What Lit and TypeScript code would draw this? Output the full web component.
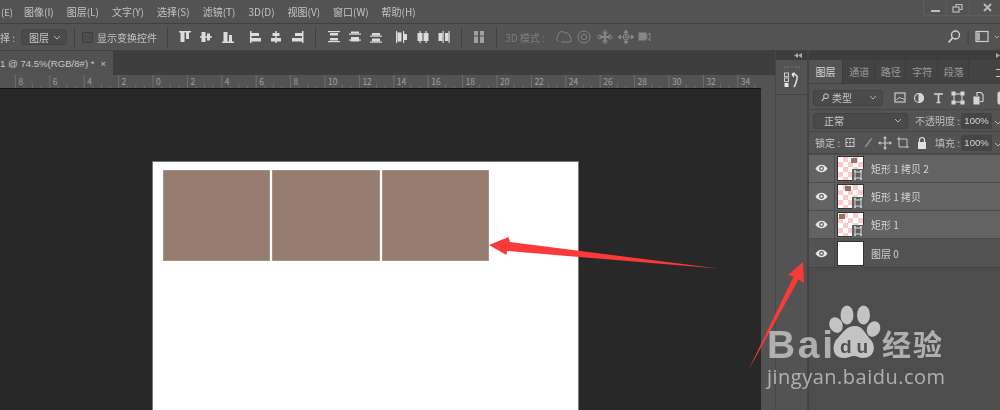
import { LitElement, html, css, svg } from "lit";
import { customElement } from "lit/decorators.js";

const menus = ["图像(I)", "图层(L)", "文字(Y)", "选择(S)", "滤镜(T)", "3D(D)", "视图(V)", "窗口(W)", "帮助(H)"];
const chev = html`<svg class="chev" width="8" height="5" viewBox="0 0 8 5"><path d="M1 1l3 3 3-3" fill="none" stroke="#b5b5b5" stroke-width="1"/></svg>`;

const ic = (body: unknown, w = 14) => html`<svg width=${w} height="14" viewBox="0 0 ${w} 14" fill="#dcdcdc">${body}</svg>`;
const alignIcons = [
  svg`<rect x="1" y="1" width="12" height="1.5"/><rect x="2.5" y="2" width="4" height="10"/><rect x="8" y="2" width="3" height="7"/>`,
  svg`<rect x="1" y="6.2" width="12" height="1.5"/><rect x="2.5" y="2" width="4" height="10"/><rect x="8" y="3.5" width="3" height="7"/>`,
  svg`<rect x="1" y="11.5" width="12" height="1.5"/><rect x="2.5" y="2" width="4" height="10"/><rect x="8" y="5" width="3" height="7"/>`,
  svg`<rect x="2" y="1" width="1.5" height="12"/><rect x="3" y="3" width="8" height="3"/><rect x="3" y="8" width="10" height="3.5"/>`,
  svg`<rect x="6.2" y="1" width="1.5" height="12"/><rect x="3.5" y="3" width="7" height="3"/><rect x="2" y="8" width="10" height="3.5"/>`,
  svg`<rect x="11" y="1" width="1.5" height="12"/><rect x="4" y="3" width="8" height="3"/><rect x="1" y="8" width="11" height="3.5"/>`,
];
const distIcons = [
  svg`<rect x="1" y="1" width="12" height="1.2"/><rect x="3" y="3" width="8" height="2.5"/><rect x="1" y="11" width="12" height="1.2"/><rect x="3" y="8" width="8" height="2.5"/>`,
  svg`<rect x="1" y="3.5" width="12" height="1.2"/><rect x="3" y="1.5" width="8" height="2"/><rect x="1" y="9.5" width="12" height="1.2"/><rect x="3" y="7" width="8" height="4.5"/>`,
  svg`<rect x="1" y="5.5" width="12" height="1.2"/><rect x="3" y="3" width="8" height="2.5"/><rect x="1" y="11.5" width="12" height="1.2"/><rect x="3" y="8.5" width="8" height="3"/>`,
  svg`<rect x="2" y="1" width="1.2" height="12"/><rect x="3.5" y="2.5" width="4" height="9"/><rect x="9" y="1" width="1.2" height="12"/><rect x="10" y="4" width="3" height="6"/>`,
  svg`<rect x="3.5" y="1" width="1.2" height="12"/><rect x="1.5" y="3" width="5" height="8"/><rect x="9.5" y="1" width="1.2" height="12"/><rect x="7.5" y="3" width="5" height="8"/>`,
  svg`<rect x="5.5" y="1" width="1.2" height="12"/><rect x="1.5" y="3" width="4" height="8"/><rect x="11.5" y="1" width="1.2" height="12"/><rect x="8" y="3" width="3.5" height="8"/>`,
];

const eye = html`<svg width="13" height="9" viewBox="0 0 13 9"><path d="M.5 4.5C2 2 4 .7 6.5.7S11 2 12.5 4.5C11 7 9 8.3 6.5 8.3S2 7 .5 4.5z" fill="#e6e6e6"/><circle cx="6.5" cy="4.5" r="2.4" fill="#555"/><circle cx="6.5" cy="4.5" r="1.2" fill="#e6e6e6"/></svg>`;

const layers = [
  { name: "矩形 1 拷贝 2", x: 13, on: true, shape: true },
  { name: "矩形 1 拷贝", x: 7, on: true, shape: true },
  { name: "矩形 1", x: 1, on: true, shape: true },
  { name: "图层 0", x: 0, on: false, shape: false },
];

const ticks = () => {
  const out: unknown[] = [];
  const labels = [8, 6, 4, 2, 0];
  for (let i = -4; i <= 17; i++) {
    const x = 153 + i * 34.4;
    const lab = i < 0 ? labels[i + 4] : i * 2;
    out.push(svg`<line x1=${x} x2=${x} y1="0" y2="13" stroke="#7c7c7c" stroke-width=".7"/>`);
    out.push(svg`<text x=${x + 3} y="9.5" font-size="8.5" fill="#a0a0a0">${lab}</text>`);
    for (const k of [1, 2, 3]) {
      const t = x + (k * 34.4) / 4;
      out.push(svg`<line x1=${t} x2=${t} y1=${k === 2 ? 9 : 11} y2="13" stroke="#7c7c7c" stroke-width=".6"/>`);
    }
  }
  return out;
};

@customElement("app-root")
export class AppRoot extends LitElement {
  static styles = css`
    :host { display: block; position: relative; width: 1000px; height: 410px; overflow: hidden; background: #535353; color: #c4c4c4;
      font-family: "Noto Sans CJK SC", "Liberation Sans", sans-serif; font-size: 10px; }
    .blur { filter: blur(.45px); height: 100%; }
    .menu { height: 23px; display: flex; align-items: center; gap: 13px; border-bottom: 1px solid #404040; font-size: 10px; position: relative; }
    .menu span { white-space: nowrap; }
    .menu .first { width: 11px; font-size: 9.5px; padding-left: 1px; box-sizing: border-box; }
    .winbtns { position: absolute; right: 0; top: 0; width: 76px; height: 15px; border: 1px solid #5e5e5e; border-width: 0 0 1px 1px; border-radius: 0 0 0 3px; display: flex; align-items: center; }
    .winbtns svg { flex: none; }
    .options { height: 26px; display: flex; align-items: center; border-bottom: 1px solid #404040; position: relative; white-space: nowrap; }
    .sel { height: 16px; box-sizing: border-box; background: #4a4a4a; border: 1px solid #434343; border-radius: 3px; display: flex; align-items: center; justify-content: space-between; padding: 0 5px 0 7px; color: #c8c8c8; flex: none; }
    .sel .lab { display: flex; align-items: center; gap: 3px; }
    .vsep { width: 1px; height: 19px; background: #3f3f3f; flex: none; }
    .cb { width: 9px; height: 9px; border: 1px solid #3c3c3c; border-radius: 2px; background: #4d4d4d; flex: none; }
    .g { display: flex; gap: 7.4px; align-items: center; }
    .dim { color: #7f7f7f; }
    .dimg { stroke: #868686; fill: none; }
    .main { display: flex; height: 359px; }
    .work { width: 775px; flex: none; display: flex; flex-direction: column; border-right: 1px solid #474747; box-sizing: content-box; }
    .tabs { height: 24px; background: #3e3e3e; flex: none; display: flex; }
    .tab { width: 113px; background: #525252; display: flex; align-items: center; box-sizing: border-box; font-family: "Liberation Sans", "Noto Sans CJK SC", sans-serif; font-size: 9.6px; gap: 6px; white-space: nowrap; color: #c8c8c8; }
    .workrow { flex: 1; display: flex; min-height: 0; }
    .docwrap { width: 761px; flex: none; display: flex; flex-direction: column; }
    .ruler { height: 13px; display: block; background: #535353; flex: none; }
    .canvas { flex: 1; background: #282828; padding-top: 73px; padding-left: 153px; box-sizing: border-box; border-top: 1px solid #111; overflow: hidden; }
    .page { width: 425px; height: 300px; background: #fff; box-shadow: 0 0 0 1px #777; padding: 7.5px 10px; box-sizing: border-box; display: flex; gap: 1.9px; }
    .sq { width: 107.4px; height: 91px; background: #967d70; box-shadow: inset 0 0 0 .5px #b5a59c; }
    .dock { width: 31px; flex: none; display: flex; flex-direction: column; border-right: 2px solid #434343; box-sizing: content-box; }
    .dockhead, .panelhead { height: 9px; background: #3d3d3d; flex: none; position: relative; }
    .dockbody { height: 34px; border-bottom: 1px solid #424242; display: flex; flex-direction: column; gap: 4px; align-items: center; justify-content: center; flex: none; }
    .grip { width: 16px; height: 2px; border-top: 2px dotted #666; box-sizing: border-box; }
    .panel { flex: 1; display: flex; flex-direction: column; background: #4d4d4d; min-width: 0; }
    .ptabs { height: 24px; display: flex; background: #434343; flex: none; position: relative; border-bottom: 1px solid #3f3f3f; box-sizing: border-box; }
    .ptabs span { width: 31.5px; display: flex; align-items: center; justify-content: center; color: #9b9b9b; border-right: 1px solid #3b3b3b; box-sizing: border-box; padding-left: 2px; }
    .ptabs span.on { width: 34px; background: #535353; color: #d8d8d8; padding-left: 0; }
    .pmenu { position: absolute; right: -3px; top: 9px; width: 7px; height: 6px; border-top: 1px solid #ccc; border-bottom: 1px solid #ccc; }
    .prow { display: flex; align-items: center; flex: none; padding-left: 4px; white-space: nowrap; background: #535353; border-bottom: 1px solid #474747; box-sizing: border-box; }
    .r1 { height: 26px; padding-top: 2px; }
    .r2 { height: 22px; }
    .r3 { height: 22px; gap: 0; }
    .inp { width: 31px; height: 16px; box-sizing: border-box; background: #454545; border-radius: 2px; font-size: 9.5px; display: flex; align-items: center; justify-content: center; color: #d5d5d5; font-family: "Liberation Sans", sans-serif; flex: none; }
    .rowi { display: flex; margin-left: 11px; align-items: center; flex: none; }
    .list { display: flex; flex-direction: column; gap: 1px; margin-top: 1px; }
    .layer { height: 27px; background: #636363; display: flex; align-items: center; color: #d4d4d4; }
    .layer.off { background: #535353; border-bottom: 1px solid #454545; height: 28px; }
    .eyec { width: 26px; height: 100%; flex: none; display: flex; align-items: center; justify-content: center; border-right: 1px solid #4a4a4a; box-sizing: border-box; }
    .thumb { width: 25px; height: 23px; margin-left: 2px; border: 1px solid #333; position: relative; flex: none; background: repeating-conic-gradient(#fbcaca 0 25%, #fff 0 50%) 0 0 / 10px 10px; }
    .thumb.white { background: #fff; }
    .chip { position: absolute; top: 1px; width: 6px; height: 5px; background: #8f7566; }
    .mask { position: absolute; right: -1px; bottom: -1px; width: 12px; height: 12px; background: #5f5f5f; display: flex; align-items: center; justify-content: center; }
    .lname { margin-left: 7px; font-size: 10px; }
    .overlay { position: absolute; inset: 0; pointer-events: none; }
  `;

  render() {
    return html`
      <div class="blur">
      <div class="menu"><span class="first">(E)</span>${menus.map((m) => html`<span>${m}</span>`)}
        <div class="winbtns">
          <svg width="76" height="14" viewBox="0 0 76 14" fill="none" stroke="#bcbcbc">
            <path d="M7 10h9" stroke-width="2"/><path d="M22 0v14M45 0v14" stroke="#5e5e5e"/>
            <rect x="29" y="6" width="6" height="5" stroke-width="1.2"/><path d="M32 6V3.5h6V8.5h-3" stroke-width="1.2"/>
            <path d="M60 3l7 7M67 3l-7 7" stroke-width="1.8"/>
          </svg>
        </div>
      </div>
      <div class="options">
        <span style="width:21px">择 :</span>
        <div class="sel" style="width:46px"><span>图层</span>${chev}</div>
        <div class="vsep" style="margin-left:7px"></div>
        <div class="cb" style="margin-left:7px"></div>
        <span style="margin-left:4px">显示变换控件</span>
        <div class="vsep" style="margin-left:10px"></div>
        <div class="g" style="margin-left:10px">${alignIcons.slice(0, 3).map((b) => ic(b))}</div>
        <div class="g" style="margin-left:13px">${alignIcons.slice(3).map((b) => ic(b))}</div>
        <div class="vsep" style="margin-left:10px"></div>
        <div class="g" style="margin-left:11px">${distIcons.slice(0, 3).map((b) => ic(b))}</div>
        <div class="g" style="margin-left:11px">${distIcons.slice(3).map((b) => ic(b))}</div>
        <div class="vsep" style="margin-left:10px"></div>
        <div style="margin-left:10px;display:flex">${ic(svg`<g fill="#a0a0a0"><rect x="2" y="1" width="4" height="12"/><rect x="8" y="1" width="4" height="12"/></g><rect x="0" y="5.5" width="14" height="1" fill="#535353"/>`)}</div>
        <div class="vsep" style="margin-left:10px"></div>
        <span class="dim" style="margin-left:8px;width:50px">3D 模式 :</span>
        <svg width="102" height="16" viewBox="0 0 102 16" class="dimg" stroke-width="1">
          <path d="M3 12a3 3 0 0 1 0-5 4 4 0 0 1 7-3 4 4 0 0 1 5 4 3 3 0 0 1 0 5H6"/>
          <g transform="translate(-1 0)"><circle cx="30" cy="8" r="6"/><circle cx="30" cy="8" r="2.8"/></g>
          <g transform="translate(-5 0)"><path d="M50 8h10M55 3v10" stroke-width="2"/><circle cx="55" cy="3.5" r="2"/><circle cx="55" cy="12.5" r="2"/><circle cx="50" cy="8" r="2"/><circle cx="60" cy="8" r="2"/></g>
          <g transform="translate(-6 0)"><path d="M70 8h14M77 2v12"/><path d="M77 1l2 2.5h-4zM77 15l2-2.5h-4zM69 8l2.5-2v4zM85 8l-2.5-2v4z" fill="#868686"/><circle cx="77" cy="8" r="3"/></g>
          <g transform="translate(-6 0)"><rect x="90" y="4" width="7" height="7" fill="#868686"/><path d="M97 7l4-3v8z"/></g>
        </svg>
        <svg style="position:absolute;left:946px;top:5px" width="54" height="16" viewBox="0 0 54 16" fill="none" stroke="#d0d0d0">
          <circle cx="9.5" cy="6" r="4" stroke-width="1.4"/><path d="M6.5 9L2.5 13.5" stroke-width="1.8"/>
          <path d="M22 1v14" stroke="#404040"/>
          <rect x="30" y="2.5" width="12" height="10" stroke-width="1.2"/><rect x="30" y="3.5" width="4" height="8" fill="#aaa" stroke="none"/>
          <path d="M49 7l2 2 2-2" stroke="#aaa"/>
        </svg>
      </div>
      <div class="main">
        <div class="work">
          <div class="tabs"><div class="tab"><span>1 @ 74.5%(RGB/8#) *</span><span>×</span></div></div>
          <div class="workrow">
            <div class="docwrap">
              <svg class="ruler" width="761" height="13" viewBox="0 0 761 13">${ticks()}</svg>
              <div class="canvas"><div class="page"><div class="sq"></div><div class="sq"></div><div class="sq"></div></div></div>
            </div>
          </div>
        </div>
        <div class="dock">
          <div class="dockhead"><svg style="position:absolute;left:18px;top:2px" width="8" height="5" viewBox="0 0 8 5" fill="#aaa"><path d="M4 0v5L0 2.5zM8 0v5L4 2.5z"/></svg></div>
          <div class="dockbody">
            <i class="grip"></i>
            <svg width="16" height="16" viewBox="0 0 16 16"><rect x=".5" y="1" width="4" height="3.6" fill="none" stroke="#ccc"/><rect x=".5" y="6" width="4" height="3.6" fill="none" stroke="#ccc"/><rect x=".5" y="11" width="4" height="4" fill="#e8e8e8"/><path d="M8 2c4 0 6 2 5 5s-1 5-3 8M8 2l3-1M8 2l2 3" fill="none" stroke="#e0e0e0" stroke-width="1.5"/></svg>
          </div>
        </div>
        <div class="panel">
          <div class="panelhead"><svg style="position:absolute;right:0;top:2px" width="4" height="5" viewBox="0 0 4 5" fill="#aaa"><path d="M0 0v5L4 2.5z"/></svg></div>
          <div class="ptabs"><span class="on">图层</span><span>通道</span><span>路径</span><span>字符</span><span>段落</span><i class="pmenu"></i></div>
          <div class="prow r1">
            <div class="sel" style="width:70px"><span class="lab"><svg width="8" height="9" viewBox="0 0 8 9" fill="none" stroke="#d0d0d0"><circle cx="5" cy="3.2" r="2.4"/><path d="M3.2 5L.8 8" stroke-width="1.2"/></svg>类型</span>${chev}</div>
            <div class="rowi">
              <svg width="110" height="14" viewBox="0 0 110 14" fill="none" stroke="#d5d5d5" stroke-width="1.1">
                <rect x="1" y="2" width="10" height="9"/><path d="M2.5 9l3-3 2 2 1-1 2 2" stroke-width="1"/>
                <circle cx="25" cy="7" r="4.5"/><path d="M25 2.5a4.5 4.5 0 0 1 0 9z" fill="#d5d5d5"/>
                <path d="M40 3h9M44.5 3v8.5M42.5 11.5h4" stroke-width="1.6"/>
                <rect x="60" y="3" width="8" height="8"/><path d="M58 1h3v3h-3zM67 1h3v3h-3zM58 10h3v3h-3zM67 10h3v3h-3z" fill="#d5d5d5"/>
                <path d="M80 6h5v7h-5z" fill="#d5d5d5"/><path d="M83 5V1.5h4l2 2v7h-3"/>
                <rect x="104" y="1" width="4" height="12" rx="2" fill="#d5d5d5"/>
              </svg>
            </div>
          </div>
          <div class="prow r2">
            <div class="sel" style="width:95px"><span style="margin-left:3px">正常</span>${chev}</div>
            <span style="margin-left:7px;width:46px;color:#bdbdbd;flex:none">不透明度 :</span><div class="inp">100%</div>
            <span style="margin-left:2px">${chev}</span>
          </div>
          <div class="prow r3">
            <span style="margin-left:2px;width:24px;flex:none">锁定 :</span>
            <svg width="90" height="14" viewBox="0 0 90 14" fill="none" stroke="#c8c8c8" style="margin-left:4px;flex:none">
              <g transform="translate(2 0)"><rect x="1" y="2.5" width="8" height="8"/><path d="M1 6.5h8M5 2.5v8" stroke-dasharray="2 1"/></g>
              <path d="M21 12l2-3 5-7 1 1-5 7z" fill="#9a9a9a" stroke="none"/>
              <g transform="translate(2 0)"><path d="M40 1v12M34 7h12" stroke-width="1.2"/><path d="M40 0l2 2.5h-4zM40 14l2-2.5h-4zM33 7l2.5-2v4zM47 7l-2.5-2v4z" fill="#c8c8c8" stroke="none"/></g>
              <path d="M54 3h10v9M56 1v10h10"/>
              <g transform="translate(3 0)"><path d="M72 6h8v7h-8z" fill="#e0e0e0" stroke="none"/><path d="M73.5 6V4a2.5 2.5 0 0 1 5 0v2" stroke="#e0e0e0" stroke-width="1.2"/></g>
            </svg>
            <span style="margin-left:2px;width:26px;flex:none;color:#bdbdbd">填充 :</span><div class="inp">100%</div>
            <span style="margin-left:2px">${chev}</span>
          </div>
          <div class="list">
            ${layers.map((l) => html`
              <div class="layer ${l.on ? "" : "off"}">
                <div class="eyec">${eye}</div>
                <div class="thumb ${l.on ? "" : "white"}">
                  ${l.shape ? html`
                    <i class="chip" style="left:${l.x}px"></i>
                    <i class="mask"><svg width="10" height="10" viewBox="0 0 10 10" fill="none" stroke="#ddd"><rect x="2" y="2" width="6" height="6"/><path d="M1 1h2M7 1h2M1 9h2M7 9h2" stroke-width="1.4"/></svg></i>` : ""}
                </div>
                <span class="lname">${l.name}</span>
              </div>`)}
          </div>
        </div>
      </div>
      </div>
      <svg class="overlay" width="1000" height="410" viewBox="0 0 1000 410">
        <path d="M718 268.5L510 242 508.5 237 489 245 506.5 255 507 251z" fill="#f93a3a"/>
        <path d="M748 371L793.5 276.5 788 275 803 262 804 283 798.5 279.5z" fill="#f93a3a"/>
        <g fill="rgba(225,225,225,.8)">
          <ellipse cx="847" cy="315" rx="6.5" ry="9.5"/>
          <ellipse cx="863.5" cy="315" rx="6.5" ry="9.5"/>
          <ellipse cx="836" cy="325" rx="6.5" ry="8" transform="rotate(-25 836 325)"/>
          <ellipse cx="873.5" cy="329" rx="6.5" ry="8" transform="rotate(25 873.5 329)"/>
          <path d="M855 326c8 0 10 8 16 14 5 6 4 18-8 18-4 0-6-2-9-2s-6 2-10 2c-12 0-12-12-8-18 6-6 10-14 19-14z"/>
        </g>
        <text x="767" y="358" font-size="39" font-weight="700" fill="rgba(235,235,235,.62)" font-family="Liberation Sans" textLength="66">Bai</text>
        <text x="840" y="353" font-size="19" font-weight="700" fill="#505050" font-family="Liberation Sans" textLength="28">du</text>
        <text x="882" y="356" font-size="29" font-weight="700" fill="rgba(235,235,235,.62)" font-family="Noto Sans CJK SC" textLength="60">经验</text>
        <text x="767" y="384" font-size="20" fill="rgba(235,235,235,.62)" font-family="Open Sans" textLength="178">jingyan.baidu.com</text>
      </svg>
    `;
  }
}
